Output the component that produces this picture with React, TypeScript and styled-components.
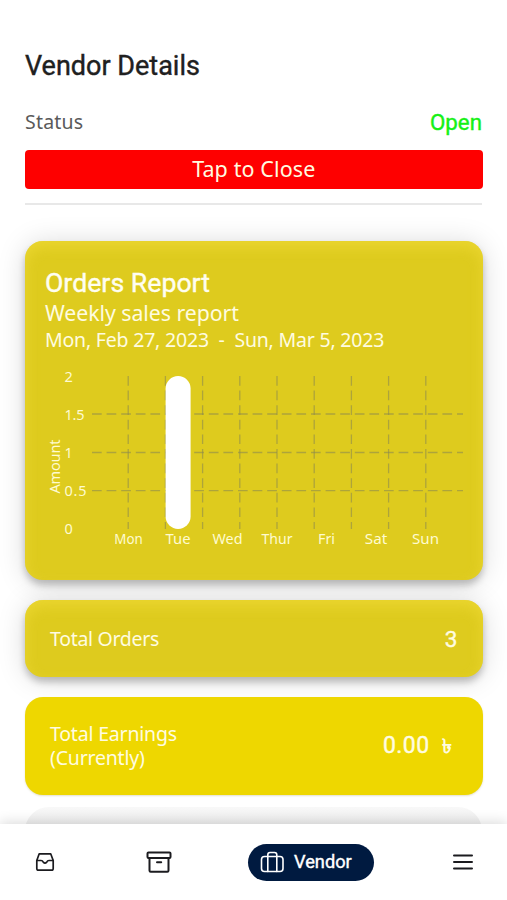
import React from "react";
import styled, { createGlobalStyle } from "styled-components";

const GlobalStyle = createGlobalStyle`
  * { box-sizing: border-box; }
  body { margin: 0; background: #fff; overflow: hidden; }
`;

const Screen = styled.div`
  width: 507px;
  height: 900px;
  display: flex;
  flex-direction: column;
  overflow: hidden;
  background: #fff;
  font-family: "Noto Sans", "Open Sans", sans-serif;
`;

const Content = styled.main`
  flex: 1;
  min-height: 0;
  overflow: hidden;
  padding: 48px 25px 0;
  display: flex;
  flex-direction: column;
`;

const Label = styled.span<{
  $size: number;
  $line: number;
  $weight?: number;
  $spacing?: number;
  $color?: string;
}>`
  display: block;
  white-space: pre;
  font-size: ${(p) => p.$size}px;
  line-height: ${(p) => p.$line}px;
  font-weight: ${(p) => p.$weight ?? 400};
  letter-spacing: ${(p) => p.$spacing ?? 0}px;
  color: ${(p) => p.$color ?? "#fffce0"};
`;

const Strong = styled(Label)`
  font-family: Roboto, "Noto Sans", sans-serif;
  -webkit-text-stroke: 0.4px currentColor;
`;

const StatusRow = styled.div`
  display: flex;
  justify-content: space-between;
  margin-top: 24px;
  height: 30px;
`;

const CloseButton = styled.button`
  flex: none;
  margin-top: 14px;
  width: 457.5px;
  height: 39px;
  border: 0;
  border-radius: 4px;
  padding: 0 0 2px;
  background: #fe0000;
  display: flex;
  justify-content: center;
  align-items: center;
  font-family: inherit;
`;

const Divider = styled.hr`
  flex: none;
  width: 457px;
  height: 2px;
  margin: 14px 0 36px;
  border: 0;
  background: #e8e8e8;
`;

const Card = styled.section<{ $height: number; $flat?: boolean }>`
  flex: none;
  width: 457.5px;
  height: ${(p) => p.$height}px;
  border-radius: 18px;
  background: ${(p) => (p.$flat ? "#eed700" : "#decb1e")};
  box-shadow: ${(p) =>
    p.$flat
      ? "0 1px 2px rgba(120, 100, 0, 0.2)"
      : "0 5px 7px rgba(0, 0, 0, 0.22), 0 2px 28px rgba(0, 0, 0, 0.15), inset 0 6px 14px rgba(244, 222, 60, 0.6)"};
`;

const ReportCard = styled(Card)`
  padding: 27px 19px 0 20px;
`;

const StatCard = styled(Card)<{ $end: number }>`
  margin-top: 20px;
  padding: 0 ${(p) => p.$end}px 0 25px;
  display: flex;
  justify-content: space-between;
  align-items: center;
`;

const NextCard = styled.section`
  flex: none;
  margin-top: 12px;
  width: 457px;
  height: 80px;
  border-radius: 24px;
  background: linear-gradient(#f8f8f8, #eeeeee 18px);
`;

const Amount = styled.div`
  display: flex;
  align-items: center;
  gap: 12px;
`;

const Chart = styled.svg`
  display: block;
  margin: 18px 0 0 -1px;
  overflow: visible;
  font-size: 14.5px;
  fill: #fffbd0;
`;

const NavBar = styled.nav`
  flex: none;
  height: 76px;
  padding: 0 33px 0 34px;
  display: grid;
  grid-template-columns: 112px 102px 1fr auto;
  align-items: center;
  background: #fff;
  box-shadow: 0 -2px 12px rgba(0, 0, 0, 0.14);
  z-index: 1;
`;

const NavItem = styled.a`
  display: flex;
  color: #1b1b1f;
`;

const ActiveItem = styled(NavItem)`
  width: 126px;
  height: 37px;
  padding-left: 12px;
  gap: 9px;
  align-items: center;
  border-radius: 19px;
  background: #001a40;
  color: #fff;
`;

const Strokes = styled.svg<{ $stroke?: number }>`
  display: block;
  fill: none;
  stroke: currentColor;
  stroke-width: ${(p) => p.$stroke ?? 2};
  stroke-linejoin: round;
  stroke-linecap: round;
`;

const days = ["Mon", "Tue", "Wed", "Thur", "Fri", "Sat", "Sun"];
const dayWidths = [28.5, 25, 30, 31, 17, 22.5, 27];
const ticks = ["2", "1.5", "1", "0.5", "0"];
const tickWidths = [8, 20, 6, 22, 9];

function WeeklyChart() {
  return (
    <Chart width="420" height="180" viewBox="44 370 420 180">
      <g stroke="#8c8b4f" strokeOpacity="0.6" strokeWidth="1.3" strokeDasharray="9.7 4.9">
        {Array.from({ length: 9 }, (_, i) => (
          <path key={i} d={`M${128.2 + i * 37.2} 376V529`} />
        ))}
        {[414, 452.5, 490.7].map((y) => (
          <path key={y} d={`M92 ${y}H463`} />
        ))}
      </g>
      <rect x="165.6" y="376" width="25" height="153" rx="12.5" fill="#fff" />
      {ticks.map((t, i) => (
        <text key={t} x="64.5" y={381.5 + i * 38.2} textLength={tickWidths[i]}>
          {t}
        </text>
      ))}
      {days.map((d, i) => (
        <text
          key={d}
          x={128.5 + i * 49.5}
          y="544"
          textAnchor="middle"
          textLength={dayWidths[i]}
          lengthAdjust="spacingAndGlyphs"
        >
          {d}
        </text>
      ))}
      <text transform="translate(60 493.5) rotate(-90)" textLength="54">
        Amount
      </text>
    </Chart>
  );
}

export default function App() {
  return (
    <>
      <GlobalStyle />
      <Screen>
        <Content>
          <Strong $size={27} $line={36} $spacing={0} $color="#202020">Vendor Details</Strong>
          <StatusRow>
            <Label $size={19.5} $line={28} $color="#5a5a5a" $spacing={0.2}>Status</Label>
            <Strong $size={22.3} $line={28} $color="#16f016">Open</Strong>
          </StatusRow>
          <CloseButton>
            <Label $size={21.5} $line={30} $spacing={0.1}>Tap to Close</Label>
          </CloseButton>
          <Divider />
          <ReportCard $height={339}>
            <Strong $size={26.7} $line={30} $color="#fffef0">Orders Report</Strong>
            <Label $size={21.3} $line={30} $spacing={-0.05}>Weekly sales report</Label>
            <Label $size={19.5} $line={24} $spacing={-0.2}>{"Mon, Feb 27, 2023  -  Sun, Mar 5, 2023"}</Label>
            <WeeklyChart />
          </ReportCard>
          <StatCard $height={77} $end={25}>
            <Label $size={19.5} $line={25} $spacing={-0.3}>Total Orders</Label>
            <Strong $size={22.5} $line={26}>3</Strong>
          </StatCard>
          <StatCard $height={98} $end={31} $flat>
            <Label $size={19.5} $line={24.5} $spacing={-0.2}>{"Total Earnings\n(Currently)"}</Label>
            <Amount>
              <Strong $size={23} $line={26} $spacing={0.4}>0.00</Strong>
              <Label $size={20} $line={26} $weight={700}>৳</Label>
            </Amount>
          </StatCard>
          <NextCard />
        </Content>
        <NavBar>
          <NavItem>
            <Strokes width="22" height="22" viewBox="0 0 22 22" $stroke={1.7}>
              <path d="M2.8 9.5 5.2 2.8H16.7L19.2 9.5V17.5Q19.2 19.2 17.5 19.2H4.5Q2.8 19.2 2.8 17.5Z" />
              <path d="M2.8 9.5H7Q8.6 9.5 9.3 11.2Q11 13 12.7 11.2Q13.4 9.5 15 9.5H19.2" />
            </Strokes>
          </NavItem>
          <NavItem>
            <Strokes width="26" height="24" viewBox="0 0 26 24">
              <rect x="1.5" y="2.5" width="23" height="5.4" rx="1" />
              <path d="M3.5 8V20.5Q3.5 21.7 4.7 21.7H21.3Q22.5 21.7 22.5 20.5V8M11 12.3H15.2" />
            </Strokes>
          </NavItem>
          <ActiveItem>
            <Strokes width="25" height="24" viewBox="0 0 25 24" $stroke={1.6}>
              <rect x="1.5" y="6.5" width="21.5" height="15" rx="3" />
              <path d="M7.8 21.5V4.8Q7.8 2.5 10 2.5H14.5Q16.8 2.5 16.8 4.8V21.5" />
            </Strokes>
            <Strong $size={18.2} $line={24} $color="#fff">Vendor</Strong>
          </ActiveItem>
          <NavItem>
            <Strokes width="22" height="18" viewBox="0 0 22 18">
              <path d="M2 2.5H20M2 9H20M2 15.5H20" />
            </Strokes>
          </NavItem>
        </NavBar>
      </Screen>
    </>
  );
}
